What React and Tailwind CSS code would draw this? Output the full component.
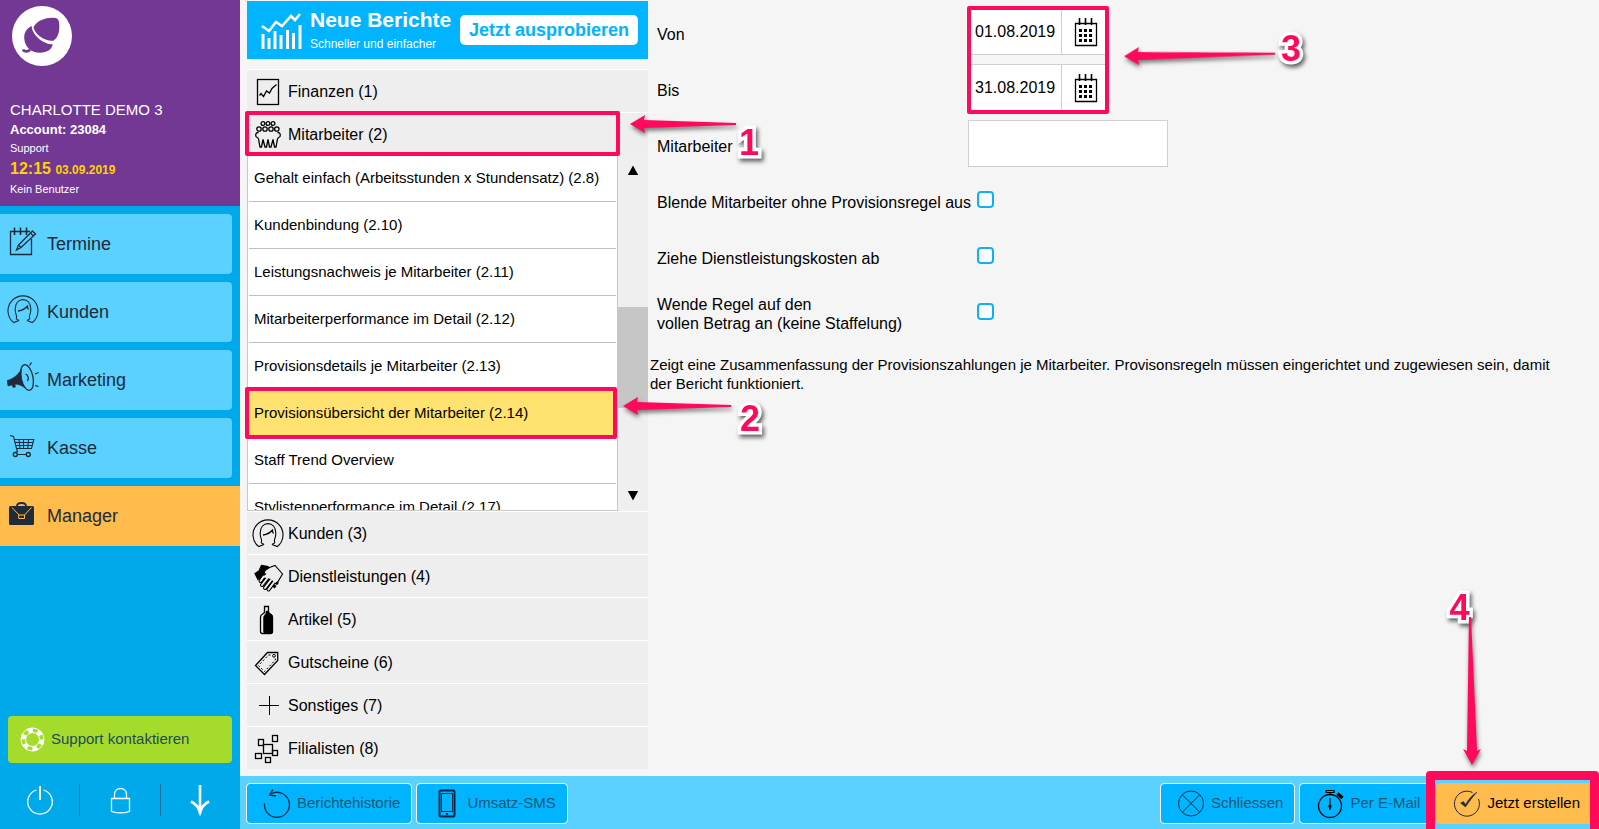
import React, { useState } from 'react';

function Icon({ size = 32, className = '', children }) {
  return (
    <svg
      width={size}
      height={size}
      viewBox={`0 0 ${size} ${size}`}
      fill="none"
      stroke="currentColor"
      strokeWidth="1.3"
      className={`shrink-0 ${className}`}
      aria-hidden="true">
      {children}
    </svg>
  )
}

function CustomerIcon() {
  return (
    <Icon>
      <path d="M12 26.6L6.7 28.6A15 15 0 1 1 25.3 28.6L20 26.6M12 26.6C11.5 25.8 9.6 25.8 9.2 24.6C10.8 22.4 8 20 8.2 15C8.4 9 11.6 5.6 16 5.6C20.4 5.6 23.6 9 23.8 15C24 20 21.2 22.4 22.8 24.6C22.4 25.8 20.5 25.8 20 26.6" strokeWidth="1.1" />
      <path d="M11 17C15.5 16.5 19 14 21 11.5M20 12.5L21.5 15.5" />
    </Icon>
  )
}

function CalendarIcon() {
  return (
    <Icon stroke="black" className="mb-0.5 ml-[3px]">
      <path d="M5.5 8.5H26.5V30.5H5.5Z" />
      <path d="M9.5 3V10M15.5 3V10M21.5 3V10" strokeWidth="1.6" />
      <path d="M9 15.5H23M9 20.5H23M9 25.5H23" strokeWidth="3" strokeDasharray="3 2" />
    </Icon>
  )
}

const navItems = [
  {
    label: 'Termine',
    icon: (
      <Icon>
        <path d="M23 5.5H3.5V28.5H24.5V13" />
        <path d="M7.5 1.5V9M13.5 1.5V9M19.5 1.5V9" strokeWidth="1.6" />
        <path d="M25.5 5L28.5 8L14 21.5L9.5 24L11.5 19Z M23.5 7L26.5 10M11.5 19L14 21.5" />
      </Icon>
    ),
  },
  { label: 'Kunden', icon: <CustomerIcon /> },
  {
    label: 'Marketing',
    icon: (
      <Icon>
        <path d="M0 18.5C6 17 11 13 14.5 7C13.5 14 14.5 20 17.5 25.5C13 22.5 9 22 8 22.5L8.5 25L6 25.5L5 23L1 24Z" fill="currentColor" strokeWidth="0.5" />
        <ellipse cx="20" cy="15.5" rx="6" ry="13" transform="rotate(-12 20 15.5)" />
        <path d="M18.5 12C21.5 13 22 17 20.5 19" />
        <path d="M22.5 3.5L24.5 0.5M28 12L31.5 10.5M28 23.5L31.5 24.5" />
      </Icon>
    ),
  },
  {
    label: 'Kasse',
    icon: (
      <Icon>
        <path d="M3 5.5L6.5 6.5L9.5 18.5H24.5L26.8 9.5H7.3M8 12.5H26M8.6 15.5H25.3M12 9.5L13 18.5M16.5 9.5V18.5M21.5 9.5L20.8 18.5M9.5 18.5L10.5 21.5L8.5 22.5M10.5 24.5H19" strokeWidth="1.1" />
        <circle cx="8.3" cy="24.5" r="2" />
        <circle cx="21.3" cy="24.5" r="2" />
      </Icon>
    ),
  },
  {
    label: 'Manager',
    icon: (
      <Icon>
        <rect x="2" y="8" width="25" height="19" rx="1.5" fill="currentColor" stroke="none" />
        <path d="M10 8C10 5.5 11.5 5 14.5 5C17.5 5 19 5.5 19 8" strokeWidth="1.8" />
        <path d="M5 9.5L12 17M24.5 9.5L17.5 17M11.7 17H17.5V20.5H11.7Z" stroke="#ffbb4b" strokeWidth="1" />
      </Icon>
    ),
  },
]

const topSections = [
  {
    label: 'Finanzen (1)',
    icon: (
      <Icon>
        <rect x="5.5" y="3.5" width="21" height="25" />
        <path d="M7.5 19.5L9 17.5L11.5 20.5L14.5 15L17.5 17L20 12.5L24.5 8.5" />
      </Icon>
    ),
  },
  {
    label: 'Mitarbeiter (2)',
    marker: true,
    icon: (
      <Icon>
        <circle cx="11" cy="4.5" r="1.9" />
        <circle cx="16" cy="4.5" r="1.9" />
        <circle cx="21" cy="4.5" r="1.9" />
        <circle cx="7" cy="10" r="2.2" />
        <circle cx="13" cy="10" r="2.2" />
        <circle cx="19" cy="10" r="2.2" />
        <circle cx="24.8" cy="10" r="2.2" />
        <path d="M6.5 13.5C4 13.5 3.5 15 3.8 17C4 18.5 6 18 6.5 20L8 28H9.5L11 20.5L13 28H14.5L16 20.5L17.5 28H19L21 20.5L22.5 28H24L25.5 20C26 18 28 18.5 28.2 17C28.5 15 28 13.5 25.5 13.5" />
      </Icon>
    ),
  },
]

const bottomSections = [
  { label: 'Kunden (3)', icon: <CustomerIcon /> },
  {
    label: 'Dienstleistungen (4)',
    icon: (
      <Icon>
        <path d="M3 12.5L7 10L9.5 4.5L16 5.5L17 7L12 12L10 15L6 18.5Z" fill="currentColor" />
        <path d="M17 28L23 22M21.5 26.5L26 20.5" strokeWidth="3" strokeDasharray="3 1" />
        <path d="M8.5 20L12 15M10 24L15.5 17M13 27L19 19M16.5 28.5L22 21" strokeWidth="4" strokeLinecap="round" />
        <path d="M8.5 20L12 15M10 24L15.5 17M13 27L19 19M16.5 28.5L22 21" stroke="#eeeeee" strokeWidth="2" strokeLinecap="round" />
        <path d="M11.5 14.5L13 9.5L17.5 6.5L23 4.5L30.5 13L26 20L23.5 22L18 17.5L12 16.5Z" fill="#eeeeee" stroke="none" />
        <path d="M11.5 14.5L13 9.5L17.5 6.5L23 4.5L30.5 13L26 20.5L24 22M11.5 14.5L14 12.5" strokeWidth="1.1" />
      </Icon>
    ),
  },
  {
    label: 'Artikel (5)',
    icon: (
      <Icon>
        <path d="M12.5 2.5H16.5V8C16.5 10 20.5 9.5 20.5 13V27.5C20.5 29 19.5 29.5 18.5 29.5H10.5C9.5 29.5 8.5 29 8.5 27.5V13C8.5 9.5 12.5 10 12.5 8Z" />
        <path d="M14 7H16.5V8.5C17 10 20.5 9.5 20.5 13V27.5C20.5 29 19.5 29.5 18.5 29.5H13.5C12 29.5 11.5 28 11.5 27V14C11.5 11 14 11 14 8Z" fill="currentColor" strokeWidth="0.5" />
      </Icon>
    ),
  },
  {
    label: 'Gutscheine (6)',
    icon: (
      <Icon>
        <path d="M15.5 5.5H25.7V13.5L12.5 27.5L3.5 18.5Z" />
        <path d="M16.5 8H20M23.3 11.5V13L12.5 24.5L6.5 18.5L16.5 8" strokeDasharray="2 2" strokeWidth="1" />
        <circle cx="22" cy="8.8" r="1.4" strokeWidth="1" />
      </Icon>
    ),
  },
  {
    label: 'Sonstiges (7)',
    icon: (
      <Icon>
        <path d="M7 15.5H27M17.5 6V25" strokeWidth="1" />
      </Icon>
    ),
  },
  {
    label: 'Filialisten (8)',
    icon: (
      <Icon>
        <rect x="11.5" y="11.5" width="9" height="9" />
        <rect x="6.5" y="6.5" width="5" height="6" />
        <rect x="20.5" y="2.5" width="5" height="6" />
        <rect x="20.5" y="17.5" width="5" height="5" />
        <rect x="3.5" y="20.5" width="6" height="5" />
        <rect x="13.5" y="24.5" width="5" height="5" />
      </Icon>
    ),
  },
]

const reports = [
  'Gehalt einfach (Arbeitsstunden x Stundensatz) (2.8)',
  'Kundenbindung (2.10)',
  'Leistungsnachweis je Mitarbeiter (2.11)',
  'Mitarbeiterperformance im Detail (2.12)',
  'Provisionsdetails je Mitarbeiter (2.13)',
  'Provisionsübersicht der Mitarbeiter (2.14)',
  'Staff Trend Overview',
  'Stylistenperformance im Detail (2.17)',
]

function StepNumber({ className, children }) {
  return (
    <span className={`absolute text-4xl leading-none font-bold text-[#ff0a5a] [paint-order:stroke_fill] [-webkit-text-stroke:7px_white] drop-shadow-[2px_3px_2px_rgba(0,0,0,0.6)] ${className}`}>
      {children}
    </span>
  )
}

// Left-pointing marker arrow, the tail tapers off to the right
function Arrow({ width, className }) {
  return (
    <svg
      width={width}
      height="18"
      viewBox={`0 0 ${width} 18`}
      className={`absolute drop-shadow-[1px_3px_2px_rgba(0,0,0,0.5)] ${className}`}
      aria-hidden="true">
      <path d={`M0 9L15 0L14 5L${width} 8V10L14 13L15 18Z`} fill="#ff0a5a" />
    </svg>
  )
}

function Sidebar() {
  return (
    <aside className="w-60 shrink-0 flex flex-col bg-[#00a9e9]">
      <div className="h-[206px] bg-[#733794] text-white px-2.5 pt-1.5">
        <svg width="60" height="60" viewBox="0 0 60 60" className="ml-0.5" aria-hidden="true">
          <circle cx="30" cy="30" r="30" fill="white" />
          <path d="M21.5 21.5C24 15 33 11.7 40 11.7C46 11.7 47.3 13 47.3 21C47.3 28 45 32 41.5 34.7C32 35.5 23 28 21.5 21.5Z" fill="#733794" />
          <path d="M19.7 20C13 23.5 12 28 12.3 33C13 41 19 46.7 28 46.7C35 46.7 40 43.5 40.7 38.3C32 38.5 20 29.5 19.7 20Z" fill="#733794" />
          <path d="M11 43.5C12 46 16.5 46 18 43.5" stroke="#733794" strokeWidth="2.6" fill="none" />
        </svg>
        <div className="mt-8 text-[15px] leading-6">CHARLOTTE DEMO 3</div>
        <div className="text-[13px] leading-4 font-bold">Account: 23084</div>
        <div className="text-[11px] leading-5">Support</div>
        <div className="leading-[22px] font-bold text-[#ffd200]">
          <span className="text-base leading-[22px]">12:15</span> <span className="text-xs leading-[22px]">03.09.2019</span>
        </div>
        <div className="text-[11px] leading-4">Kein Benutzer</div>
      </div>
      <nav className="flex flex-col gap-2 pt-2">
        {navItems.map((item) => (
          <button
            key={item.label}
            className={`h-15 flex items-center gap-2 pl-[7px] text-lg text-[#1f2a3a] ${
              item.label === 'Manager' ? 'bg-[#ffbb4b]' : 'bg-[#5bd1ff] mr-2 rounded-r'
            }`}>
            <span className="pb-1">{item.icon}</span>
            {item.label}
          </button>
        ))}
      </nav>
      <div className="mt-auto">
        <button className="w-56 mx-2 h-[47px] flex items-center gap-1.5 pl-3 rounded bg-[#a5dc2c] text-[15px] text-[#1f4a5c]">
          <svg width="25" height="25" viewBox="0 0 25 25" fill="none" stroke="white" aria-hidden="true">
            <circle cx="12.5" cy="12.5" r="11.5" />
            <circle cx="12.5" cy="12.5" r="9.3" strokeWidth="5" strokeDasharray="4.87 4.87" />
            <circle cx="12.5" cy="12.5" r="7" />
          </svg>
          Support kontaktieren
        </button>
        <div className="h-[66px] pt-2 flex items-center text-white">
          <button className="flex-1 h-8 flex justify-center" aria-label="Ausschalten">
            <Icon>
              <path d="M12.5 6A12.3 12.3 0 1 0 19.5 6" />
              <path d="M16 2V16" strokeWidth="2" />
            </Icon>
          </button>
          <button className="flex-1 h-8 flex justify-center border-x border-[#1b6f9c]" aria-label="Sperren">
            <Icon>
              <path d="M7.5 14.5H25.5V27.5C20 29.3 13 29.3 7.5 27.5Z" />
              <path d="M10.5 14.5V10.5C10.5 2.5 22.5 2.5 22.5 10.5V14.5" />
            </Icon>
          </button>
          <button className="flex-1 h-8 flex justify-center" aria-label="Nach unten">
            <Icon>
              <path d="M16 1V30" strokeWidth="2.6" />
              <path d="M7 17.5C11 19.5 14.5 23 16 28C17.5 23 21 19.5 25 17.5" strokeWidth="2.8" />
            </Icon>
          </button>
        </div>
      </div>
    </aside>
  )
}

function SectionHeader({ section }) {
  return (
    <div className="relative">
      <button className="w-full h-[43px] flex items-center gap-1 pl-[5px] pt-px border-t border-white bg-[#eeeeee] text-base">
        {section.icon}
        {section.label}
      </button>
      {section.marker && (
        <div className="absolute z-10 -left-0.5 -top-px w-[375px] h-[45px] border-4 border-[#ff0a5a] rounded-xs">
          <Arrow width={106} className="left-[381px] top-0" />
          <StepNumber className="left-[490px] top-[10px]">1</StepNumber>
        </div>
      )}
    </div>
  )
}

function ReportList() {
  const [selected, setSelected] = useState('Provisionsübersicht der Mitarbeiter (2.14)');
  return (
    <div className="flex-1 min-h-0 flex bg-[#efefef]">
      <ul className="flex-1 overflow-hidden bg-white border border-t-0 border-[#c8c8c8] px-px">
        {reports.map((report) => (
          <li key={report} className="relative h-[47px] border-b border-[#bfbfbf]">
            <button
              onClick={() => setSelected(report)}
              className={`w-full h-full text-left pl-[5px] text-[15px] ${report === selected ? 'bg-[#ffe26f]' : ''}`}>
              {report}
            </button>
          </li>
        ))}
      </ul>
      <div className="w-[30px] flex flex-col items-center pt-2.5 pb-2.5">
        <svg width="12" height="11" viewBox="0 0 12 11" aria-hidden="true"><path d="M6 0.5L11.2 10H0.8Z" /></svg>
        <div className="w-full h-[101px] mt-[131px] bg-[#c6c6c6]" />
        <svg width="12" height="11" viewBox="0 0 12 11" className="mt-auto" aria-hidden="true"><path d="M6 10.5L11.2 1H0.8Z" /></svg>
      </div>
    </div>
  )
}

function ReportNav() {
  return (
    <div className="w-[401px] shrink-0 flex flex-col pt-px pb-[7px]">
      <div className="h-[58px] mb-2.5 flex items-center bg-[#00b4ff] text-white">
        <svg width="41" height="38" viewBox="0 0 41 38" fill="none" stroke="white" className="ml-3.5 shrink-0" aria-hidden="true">
          <path d="M1 15L8 20L15 11L21 15L30 5L34 9L39 3" strokeWidth="2.6" />
          <path d="M2 23V38M8 27V38M14 20V38M20 24V38M26.5 19V38M32.5 22V38M39 14V38" strokeWidth="3" />
        </svg>
        <div className="ml-2 pt-1 flex flex-col">
          <span className="text-[21px] leading-6 font-bold">Neue Berichte</span>
          <span className="text-xs leading-6">Schneller und einfacher</span>
        </div>
        <button className="ml-auto mr-2.5 h-[30px] px-[9px] rounded-[5px] bg-white text-lg leading-none font-bold text-[#00b4ff]">
          Jetzt ausprobieren
        </button>
      </div>
      {topSections.map((section) => <SectionHeader key={section.label} section={section} />)}
      <div className="relative flex-1 min-h-0 flex flex-col">
        <ReportList />
        <div className="absolute z-10 pointer-events-none -left-0.5 top-[232px] w-[372px] h-[52px] border-4 border-[#ff0a5a] rounded-xs">
          <Arrow width={108} className="left-[374px] top-1.5" />
          <StepNumber className="left-[491px] top-[10px]">2</StepNumber>
        </div>
      </div>
      {bottomSections.map((section) => <SectionHeader key={section.label} section={section} />)}
    </div>
  )
}

function DateField({ id, value }) {
  return (
    <div className="w-[140px] h-[47px] flex border border-[#cfcfcf] bg-white">
      <input id={id} type="text" defaultValue={value} className="flex-1 min-w-0 pl-1.5 outline-none" />
      <button type="button" className="w-[46px] flex items-center justify-center border-l border-[#cfcfcf]" aria-label="Kalender">
        <CalendarIcon />
      </button>
    </div>
  )
}

function FormRow({ id, label, children }) {
  return (
    <div className="h-14 flex items-start">
      <label htmlFor={id} className="w-[311px] h-[52px] flex items-center whitespace-pre">{label}</label>
      <div className="h-[47px] flex items-center">{children}</div>
    </div>
  )
}

function ReportForm() {
  const checkbox = 'ml-[9px] size-[17px] appearance-none rounded-[4px] border-2 border-[#14b0ea] bg-white/50 checked:bg-[#14b0ea]'
  return (
    <form className="flex-1 min-w-0 pt-2 pl-[2px] pr-3 text-base leading-[19px]">
      <div className="relative pl-[7px]">
        <FormRow id="von" label="Von"><DateField id="von" value="01.08.2019" /></FormRow>
        <FormRow id="bis" label="Bis"><DateField id="bis" value="31.08.2019" /></FormRow>
        <div className="absolute z-10 pointer-events-none left-[317px] -top-0.5 w-[142px] h-[108px] border-4 border-[#ff0a5a] rounded-xs">
          <Arrow width={151} className="left-[153px] top-9 rotate-[-1deg]" />
          <StepNumber className="left-[310px] top-[21px]">3</StepNumber>
        </div>
        <FormRow id="mitarbeiter" label="Mitarbeiter">
          <input id="mitarbeiter" type="text" className="w-50 h-[47px] px-1.5 border border-[#cfcfcf] bg-white outline-none" />
        </FormRow>
        <FormRow id="blende" label="Blende Mitarbeiter ohne Provisionsregel aus">
          <input id="blende" type="checkbox" className={checkbox} />
        </FormRow>
        <FormRow id="kosten" label="Ziehe Dienstleistungskosten ab">
          <input id="kosten" type="checkbox" className={checkbox} />
        </FormRow>
        <FormRow id="regel" label={'Wende Regel auf den\nvollen Betrag an (keine Staffelung)'}>
          <input id="regel" type="checkbox" className={checkbox} />
        </FormRow>
      </div>
      <p className="mt-[11px] pr-6 text-[15px] leading-[19px]">
        Zeigt eine Zusammenfassung der Provisionszahlungen je Mitarbeiter. Provisonsregeln müssen eingerichtet und zugewiesen sein, damit der Bericht funktioniert.
      </p>
    </form>
  )
}

function FooterButton({ icon, primary, children }) {
  return (
    <button
      className={`h-[41px] flex items-center gap-1 pl-3.5 pr-[11px] rounded border text-[15px] ${
        primary ? 'bg-[#ffbb4b] border-[#ffbb4b] text-black' : 'bg-[#00b4ff] border-white text-[#1a5674]'
      }`}>
      {icon}
      {children}
    </button>
  )
}

function Footer() {
  return (
    <footer className="h-[53px] shrink-0 flex items-center gap-1 pl-1.5 pr-[7px] pt-0.5 bg-[#5bd1ff]">
      <FooterButton icon={
        <Icon className="text-[#062b40]">
          <path d="M3.5 15.5A12.5 12.5 0 1 0 10 5.8" />
          <path d="M12 1.5L8.5 7L15 8" />
        </Icon>
      }>
        Berichtehistorie
      </FooterButton>
      <FooterButton icon={
        <Icon className="text-[#062b40]">
          <rect x="8.5" y="2.5" width="15" height="26" rx="1.5" strokeWidth="2" />
          <rect x="10.5" y="5.5" width="11" height="18" strokeWidth="1" />
          <path d="M15 26H17" strokeWidth="2" />
        </Icon>
      }>
        Umsatz-SMS
      </FooterButton>
      <div className="flex-1" />
      <FooterButton icon={
        <Icon className="text-[#062b40]">
          <circle cx="16" cy="15.5" r="12.5" strokeWidth="1" />
          <path d="M7.5 7L24.5 24M24.5 7L7.5 24" strokeWidth="1" />
        </Icon>
      }>
        Schliessen
      </FooterButton>
      <FooterButton icon={
        <Icon className="text-black">
          <circle cx="16" cy="18" r="11.5" />
          <path d="M16 10V20.5M16 4V6.5" strokeWidth="1.2" />
          <path d="M14.5 17.5L16 22L17.5 17.5Z" fill="currentColor" strokeWidth="0.5" />
          <path d="M12 2.5H20V4.5H12Z" strokeWidth="1.2" />
          <path d="M23.5 5.5L28.5 10" strokeWidth="3.2" />
        </Icon>
      }>
        Per E-Mail
      </FooterButton>
      <div className="relative">
        <FooterButton primary icon={
          <Icon className="text-[#1f2a3a]">
            <path d="M21.5 4.5A12.5 12.5 0 1 0 27.5 11" strokeWidth="1" />
            <path d="M9.5 15L12.5 13.5L14.5 16.5C17.5 11.5 20.5 7.5 26 4C22.5 8 18.5 13 14.5 19Z" fill="currentColor" strokeWidth="0.5" />
          </Icon>
        }>
          Jetzt erstellen
        </FooterButton>
        <div className="absolute z-10 pointer-events-none -left-2.5 -right-[7px] -top-3 -bottom-[9px]">
          <div className="absolute inset-0 border-[9px] border-b-4 border-[#ff0a5a] rounded-t" />
          <StepNumber className="left-[23px] -top-[181px]">4</StepNumber>
          <svg width="18" height="148" viewBox="0 0 18 148" className="absolute left-[37px] -top-[154px] drop-shadow-[1px_3px_2px_rgba(0,0,0,0.5)]" aria-hidden="true">
            <path d="M9 148L0 132L4 134L6 0H8L14 134L18 132Z" fill="#ff0a5a" />
          </svg>
        </div>
      </div>
    </footer>
  )
}

function App() {
  return (
    <div className="h-screen flex overflow-hidden bg-[#f5f5f5] text-black font-['Liberation_Sans',Arial,sans-serif]">
      <Sidebar />
      <div className="flex-1 min-w-0 flex flex-col">
        <main className="flex-1 min-h-0 flex pl-[7px]">
          <ReportNav />
          <ReportForm />
        </main>
        <Footer />
      </div>
    </div>
  );
}

export default App;
